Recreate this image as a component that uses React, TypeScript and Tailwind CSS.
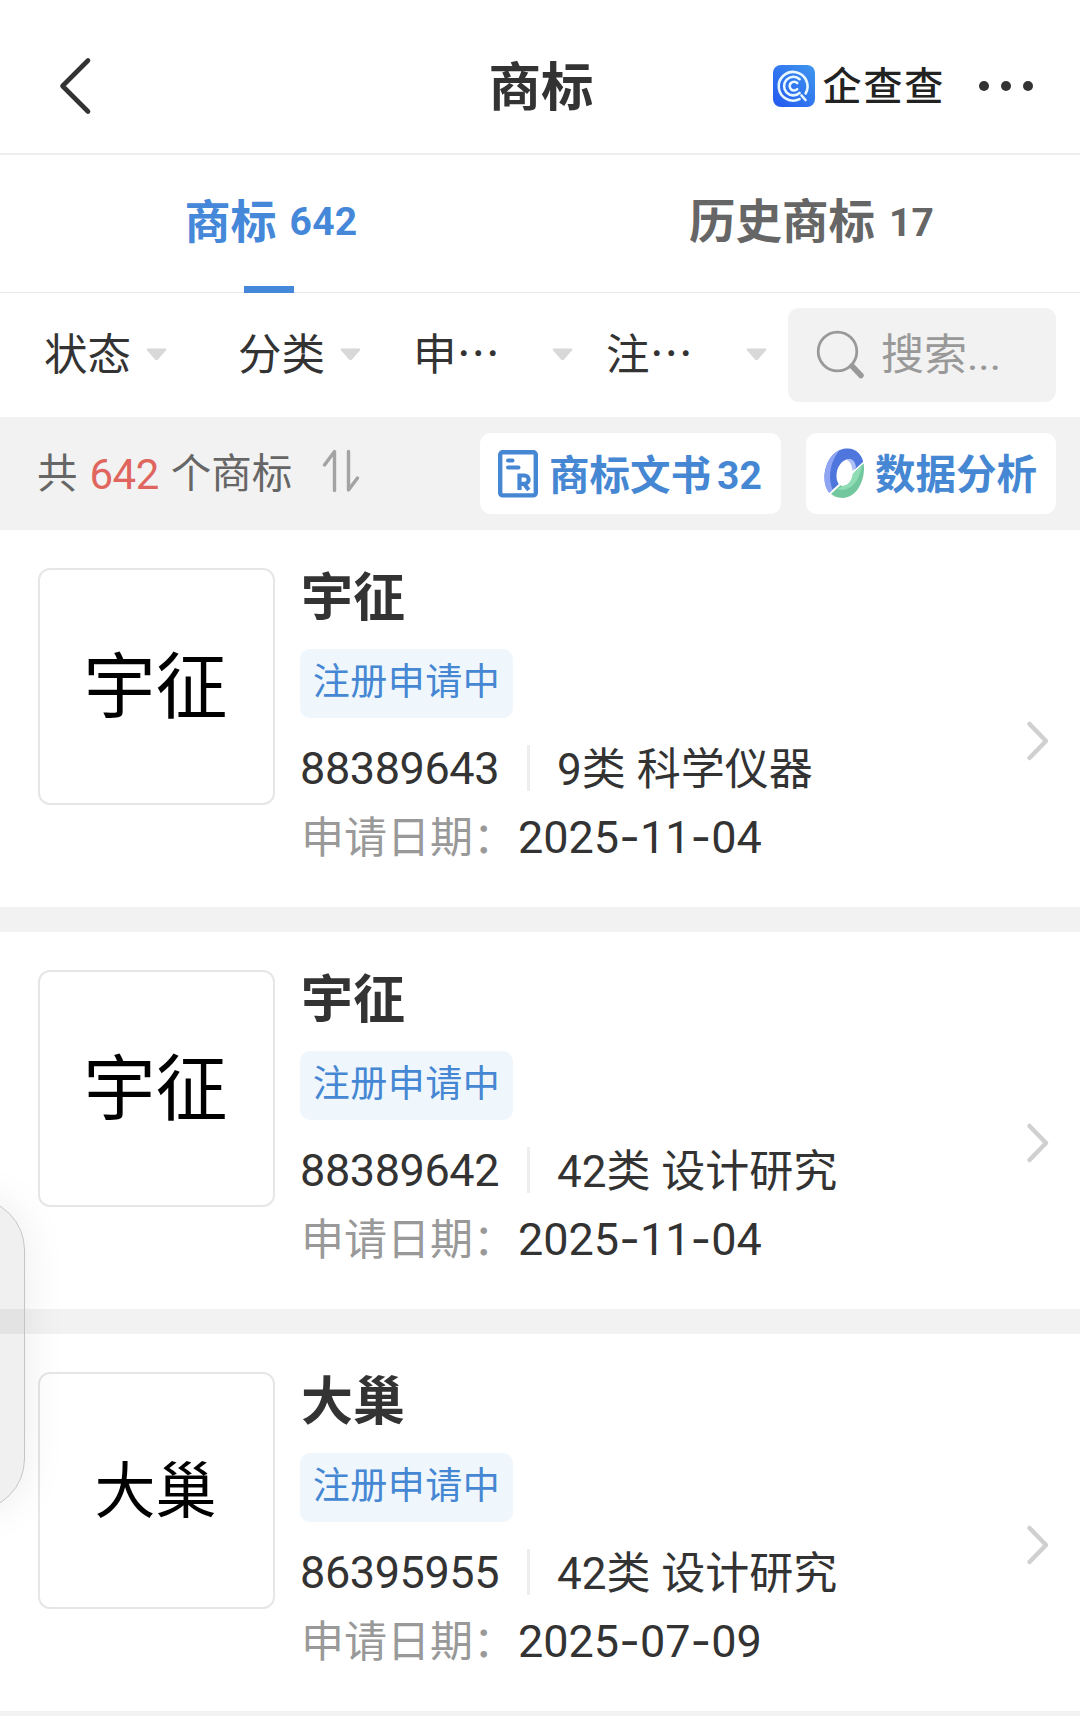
import React from 'react';

interface Trademark {
  name: string;
  mark: string;
  markSize: string;
  status: string;
  regNo: string;
  category: string;
  date: string;
}

const trademarks: Trademark[] = [
  {
    name: '宇征',
    mark: '宇征',
    markSize: 'text-[72px]',
    status: '注册申请中',
    regNo: '88389643',
    category: '9类 科学仪器',
    date: '2025-11-04',
  },
  {
    name: '宇征',
    mark: '宇征',
    markSize: 'text-[72px]',
    status: '注册申请中',
    regNo: '88389642',
    category: '42类 设计研究',
    date: '2025-11-04',
  },
  {
    name: '大巢',
    mark: '大巢',
    markSize: 'text-[61px]',
    status: '注册申请中',
    regNo: '86395955',
    category: '42类 设计研究',
    date: '2025-07-09',
  },
];

const filters = [
  { label: '状态', width: 'w-[194px]', gap: 'gap-[15px]' },
  { label: '分类', width: 'w-[175px]', gap: 'gap-[15px]' },
  { label: '申…', width: 'w-[193px]', gap: 'gap-[52px]' },
  { label: '注…', width: 'w-[182px]', gap: 'gap-[53px]' },
];

const Logo: React.FC = () => (
  <svg width="42" height="42" viewBox="0 0 42 42" fill="none">
    <defs>
      <linearGradient id="logo" x1="0" y1="1" x2="1" y2="0">
        <stop offset="0" stopColor="#2358f0" />
        <stop offset="1" stopColor="#3f97ee" />
      </linearGradient>
    </defs>
    <rect width="42" height="42" rx="8" fill="url(#logo)" />
    <g stroke="#e9f8ff" strokeWidth="2.6" strokeLinecap="round">
      <path d="M32.6 28.500A14.4 14.4 0 1 0 26.5 34.2M28.5 30.5L32.500 35" />
      <path d="M26.6 14.2A9.3 9.3 0 1 0 26.6 28" />
      <path d="M24.2 18A4.4 4.4 0 1 0 24.2 24.2" />
    </g>
  </svg>
);

const Caret: React.FC = () => (
  <svg width="21" height="13" viewBox="0 0 21 13" className="mb-[2px] shrink-0">
    <path d="M1.5 0.5H19.5Q21 0.8 20 2.2L12 11.6Q10.5 13 9 11.6L1 2.2Q0 0.8 1.5 0.5Z" fill="#d8d8d8" />
  </svg>
);

const SortIcon: React.FC = () => (
  <svg width="38" height="44" viewBox="0 0 38 44" fill="none" stroke="#a3a3a3" strokeWidth="3.4" strokeLinecap="round" strokeLinejoin="round">
    <path d="M2.500 16L12.500 2.500V41.500" />
    <path d="M26.500 2.500V41L35.500 29" />
  </svg>
);

const DocIcon: React.FC = () => (
  <svg width="40" height="48" viewBox="0 0 40 48" fill="none" stroke="#4587d3" strokeWidth="4.4">
    <rect x="2.200" y="2.200" width="35.600" height="43.200" rx="2.500" />
    <path d="M10 10.500H14.500M10 17.500H20.500" strokeWidth="4" strokeLinecap="round" />
    <path d="M21.500 40V25.500H26.500A4 4 0 0 1 26.500 33.800H21.500M26 33.800L30.800 40" strokeWidth="4.200" />
  </svg>
);

const RING =
  'M22 0.500C31 -0.500 40 6 40 20C40 36 31 50 18.500 50C7 50 0.500 41 0.500 30C0.500 15 9 1.500 22 0.500ZM24.500 11C17 12 12.500 20 12.500 28C12.500 34 15 38 19 38C26 37.500 31 29 31 20.500C31 15 29 11 24.500 11Z';

// split ring: blue above the diagonal, green below it
const ChartIcon: React.FC = () => (
  <svg width="42" height="52" viewBox="0 0 42 52">
    <defs>
      <clipPath id="upper">
        <path d="M-2 -2H44V9.500L5.500 44.500L-2 52Z" />
      </clipPath>
      <clipPath id="lower">
        <path d="M44 11.500V54H-2L6.500 46.500Z" />
      </clipPath>
    </defs>
    <g clipPath="url(#upper)">
      <path d={RING} fill="#4f76dc" fillRule="evenodd" />
      <path d="M16 2C6 6 0.500 18 0.500 30C0.500 37 2.500 42 6 46L9 42C4 32 5 14 16 2Z" fill="#8fa5f3" />
      <path d="M22 11.500C26 13 28 17 28.500 23L32 20C32 14 28 9.500 22 11.500Z" fill="#b0bff5" />
    </g>
    <g clipPath="url(#lower)">
      <path d={RING} fill="#72c79e" fillRule="evenodd" />
      <path d="M38 14L28.500 24C29 31 25 37 19 38L13 41C26 45 37 33 38 14Z" fill="#8fdcb5" />
    </g>
  </svg>
);

const Header: React.FC = () => (
  <header className="flex h-[155px] items-center border-b-2 border-[#eeeeee]">
    <div className="flex flex-1 items-center pt-[19px] pl-[58px]">
      <svg width="34" height="58" viewBox="0 0 34 58" fill="none" stroke="#333" strokeWidth="4.6" strokeLinecap="round" strokeLinejoin="round">
        <path d="M30 3.500L4.500 29L30 54.500" />
      </svg>
    </div>
    <h1 className="-ml-[10px] pt-[22px] text-[52.500px] leading-[56px] font-bold">商标</h1>
    <div className="flex flex-1 items-center justify-end pt-[18px] pr-[46px]">
      <Logo />
      <span className="ml-[8px] pt-[3px] text-[39px] leading-[42px] font-medium tracking-[1.800px] text-[#222]">企查查</span>
      <svg width="56" height="12" viewBox="0 0 56 12" fill="#333" className="ml-[33px]">
        <circle cx="6" cy="6" r="5" />
        <circle cx="28" cy="6" r="5" />
        <circle cx="50" cy="6" r="5" />
      </svg>
    </div>
  </header>
);

const Tabs: React.FC = () => (
  <nav className="grid h-[138px] grid-cols-2 border-b border-[#e8e8e8] font-bold">
    <div className="relative flex items-center justify-center pb-[4px] pl-[2px] text-[46px] text-[#4587d8]">
      商标<span className="mt-[2px] ml-[13px] text-[39px] tracking-[0.300px]">642</span>
      <div className="absolute bottom-[-1px] left-[244px] h-[7px] w-[50px] bg-[#4587d8]" />
    </div>
    <div className="flex items-center justify-center pb-[3px] pl-[3px] text-[46.500px] text-[#666]">
      历史商标<span className="mt-[2px] ml-[14px] text-[39px]">17</span>
    </div>
  </nav>
);

const FilterBar: React.FC = () => (
  <div className="flex h-[124px] items-center pl-[44px]">
    {filters.map((filter) => (
      <div key={filter.label} className={`flex items-center ${filter.width} ${filter.gap}`}>
        <span className="pb-[6px] font-['Noto_Sans_CJK_SC',sans-serif] text-[43.500px] leading-[52px]">{filter.label}</span>
        <Caret />
      </div>
    ))}
    <div className="flex h-[94px] w-[268px] items-center rounded-[11px] bg-[#f2f2f2] pl-[28px] text-[#999]">
      <svg width="50" height="50" viewBox="0 0 50 50" fill="none" stroke="#999" strokeLinecap="round">
        <circle cx="21.500" cy="21.500" r="19.300" strokeWidth="2.800" />
        <path d="M36 36L45 45.500" strokeWidth="5.500" />
      </svg>
      <span className="ml-[15px] pb-[1px] text-[43px] leading-[52px]">搜索...</span>
    </div>
  </div>
);

const Summary: React.FC = () => (
  <div className="flex h-[113px] items-center bg-[#f2f2f2] pr-[24px] pl-[37px]">
    <div className="flex items-center pt-[2px] text-[40.500px] text-[#666]">
      共<span className="mx-[12px] text-[42px] tracking-[-0.500px] text-[#e0655f]">642</span>个商标
    </div>
    <div className="mb-[6px] ml-[30px]">
      <SortIcon />
    </div>
    <div className="ml-auto flex gap-[25px] text-[40.500px] font-bold text-[#4587d3]">
      <div className="flex h-[81px] w-[301px] items-center rounded-[11px] bg-white pl-[18px]">
        <DocIcon />
        <span className="ml-[11px] pt-[6px]">商标文书</span>
        <span className="ml-[6px] pt-[5px] text-[39px]">32</span>
      </div>
      <div className="flex h-[81px] w-[250px] items-center rounded-[11px] bg-white pl-[18px]">
        <ChartIcon />
        <span className="ml-[9px] pt-[3px]">数据分析</span>
      </div>
    </div>
  </div>
);

const TrademarkCard: React.FC<{ item: Trademark }> = ({ item }) => {
  const [year, month, day] = item.date.split('-');
  const dash = <span className="font-[Inter]">-</span>;

  return (
    <article className="flex h-[377px] bg-white pl-[38px]">
      <div className="mt-[38px] flex size-[237px] items-center justify-center rounded-[12px] border-2 border-[#e6e6e6]">
        <span className={`${item.markSize} pt-[3px] pr-[2px] text-black`}>{item.mark}</span>
      </div>
      <div className="ml-[26px] pt-[41px]">
        <h2 className="text-[52px] leading-[56px] font-bold">{item.name}</h2>
        <div className="mt-[22px] -ml-[1px] flex h-[69px] w-[213px] items-center justify-center rounded-[10px] bg-[#eff6fc] pb-[2px] text-[37px] tracking-[0.500px] text-[#4587d3]">
          {item.status}
        </div>
        <div className="mt-[15px] flex h-[69px] items-center whitespace-nowrap">
          <span className="-ml-[1px] w-[227px] pt-[2px] text-[45px] tracking-[-0.400px]">{item.regNo}</span>
          <span className="h-[46px] w-[3px] bg-[#eeeeee]" />
          <span className="ml-[27px] pt-[4px] text-[44px]">{item.category}</span>
        </div>
        <div className="flex h-[69px] items-center whitespace-nowrap">
          <span className="pt-[4px] text-[43px] text-[#999]">申请日期：</span>
          <span className="ml-[2px] text-[45px]">
            {year}
            {dash}
            {month}
            {dash}
            {day}
          </span>
        </div>
      </div>
      <svg width="26" height="42" viewBox="0 0 26 42" fill="none" stroke="#d0d0d0" strokeWidth="4.500" strokeLinecap="round" strokeLinejoin="round" className="mt-[190px] mr-[29px] ml-auto">
        <path d="M4.500 4L21 21L4.500 38" />
      </svg>
    </article>
  );
};

const App: React.FC = () => {
  return (
    <div className="relative h-[1716px] w-[1080px] overflow-hidden bg-white font-[Roboto,'Noto_Sans_CJK_SC',sans-serif] leading-none text-[#333]">
      <Header />
      <Tabs />
      <FilterBar />
      <Summary />
      <main className="flex flex-col gap-[25px] bg-[#f2f2f2] pb-[5px]">
        {trademarks.map((item) => (
          <TrademarkCard key={item.regNo} item={item} />
        ))}
      </main>

      {/* floating side handle */}
      <div className="absolute top-[1198px] left-[-95px] h-[313px] w-[120px] rounded-[52px] border border-[#c4c4c4] bg-black/6 shadow-[0_0_44px_rgba(0,0,0,0.08)]" />
    </div>
  );
};

export default App;
